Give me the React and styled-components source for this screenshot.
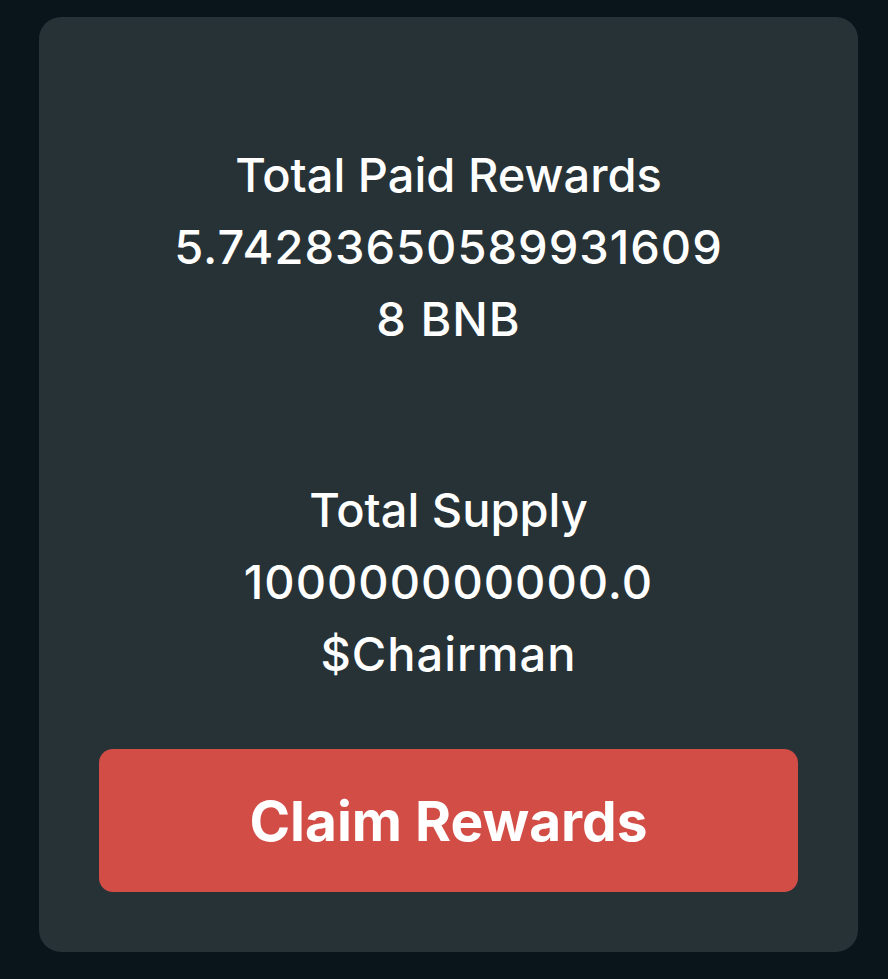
import React from 'react';
import styled, { createGlobalStyle } from 'styled-components';

const GlobalStyle = createGlobalStyle`
  html, body {
    margin: 0;
    padding: 0;
    background-color: #0a141b;
  }

  body {
    font-family: Inter, "Noto Sans", "Liberation Sans", sans-serif;
    color: #ffffff;
  }
`;

const Page = styled.div`
  padding: 17px 30px 27px 39px;
`;

const Card = styled.section`
  display: flex;
  flex-direction: column;
  align-items: center;
  height: 935px;
  box-sizing: border-box;
  padding: 122px 60px 60px;
  background-color: #263236;
  border-radius: 22px;
`;

const Stat = styled.div`
  display: flex;
  flex-direction: column;
  align-items: center;
  max-width: 560px;
  margin-bottom: ${p => p.gap}px;
  font-size: 47px;
  font-weight: 500;
  line-height: 72px;
  text-align: center;
  overflow-wrap: anywhere;
`;

const Label = styled.div``;

const Value = styled.div`
  letter-spacing: 1px;
`;

const ClaimButton = styled.button`
  width: 100%;
  height: 143px;
  margin-top: auto;
  border: none;
  border-radius: 14px;
  background-color: #d34d47;
  color: #ffffff;
  font-family: inherit;
  font-size: 55px;
  font-weight: 700;
  cursor: pointer;
`;

const stats = [
  { label: 'Total Paid Rewards', value: '5.742836505899316098 BNB', gap: 119 },
  { label: 'Total Supply', value: '100000000000.0 $Chairman', gap: 0 },
];

const App = () => (
  <>
    <GlobalStyle/>
    <Page>
      <Card>
        {stats.map((stat, index) => (
          <Stat key={`stat-${index}`} gap={stat.gap}>
            <Label>{stat.label}</Label>
            <Value>{stat.value}</Value>
          </Stat>
        ))}
        <ClaimButton>Claim Rewards</ClaimButton>
      </Card>
    </Page>
  </>
);

export default App;
